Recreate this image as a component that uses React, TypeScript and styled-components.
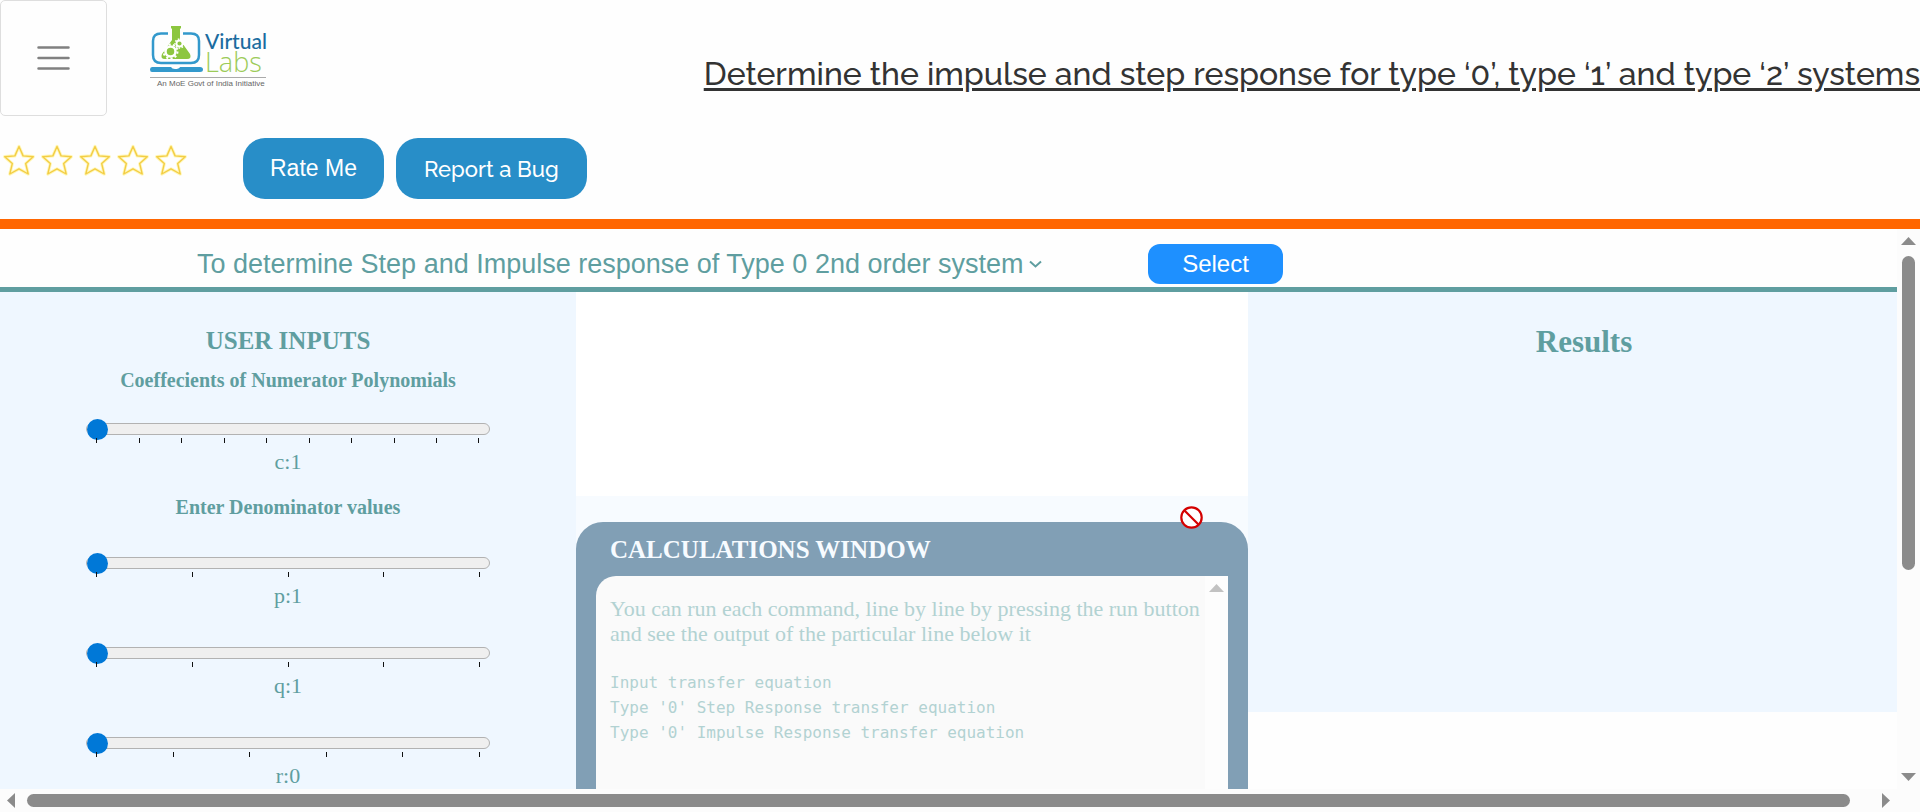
import React, { useId, useState } from 'react';
import styled, { createGlobalStyle } from 'styled-components';

const teal = '#5f9ea0';
const serif = "'Liberation Serif', 'Times New Roman', serif";
const sans = "'Liberation Sans', Arial, sans-serif";
const display = "Raleway, Lato, sans-serif";

const GlobalStyle = createGlobalStyle`
  *, *::before, *::after { box-sizing: border-box; }
  body { margin: 0; background: #fefefe; overflow: hidden; }
  h1, h2, h3, p, pre { margin: 0; }
  button, select { font-family: inherit; cursor: pointer; }
`;

const Page = styled.div`
  display: flex;
  flex-direction: column;
  height: 100vh;
  font-family: ${sans};
`;

const Header = styled.header`
  flex: none;
  border-bottom: 10px solid #ff6600;
  padding-bottom: 20px;
`;

const TopRow = styled.div`
  display: flex;
  align-items: flex-start;
`;

const MenuButton = styled.button`
  display: flex;
  align-items: center;
  justify-content: center;
  width: 107px;
  height: 116px;
  padding: 0;
  background: #fefefe;
  border: 1px solid #dedede;
  border-radius: 5px;
`;

const LogoLink = styled.a`
  display: block;
  margin: 20px 0 0 42px;
  line-height: 0;
`;

const Title = styled.h1`
  margin: 52px 0 0 auto;
  font-family: ${display};
  font-size: 32px;
  font-weight: 500;
  line-height: 44px;
  color: #333;
  white-space: nowrap;
  text-decoration: underline;
  text-decoration-thickness: 3px;
  text-underline-offset: 3px;
`;

const ActionRow = styled.div`
  display: flex;
  align-items: center;
  padding-top: 22px;
`;

const Stars = styled.div`
  display: flex;
  gap: 6px;
  width: 243px;
  padding: 0 3px 18px;
`;

const PillButton = styled.button<{ $display?: boolean }>`
  height: 61px;
  margin-right: 12px;
  padding: 0 ${p => (p.$display ? 28 : 27)}px;
  border: 0;
  border-radius: 22px;
  background: #288ec8;
  color: #fff;
  font-family: ${p => (p.$display ? display : sans)};
  font-size: ${p => (p.$display ? 22 : 23)}px;
  font-weight: ${p => (p.$display ? 500 : 400)};
`;

const Frame = styled.div`
  flex: 1;
  min-height: 0;
  display: grid;
  grid-template-columns: minmax(0, 1fr) 23px;
  grid-template-rows: minmax(0, 1fr) 23px;
  background: #fcfcfc;
`;

const Viewport = styled.main`
  overflow: hidden;
  background: #fefefe;
`;

const Toolbar = styled.div`
  display: flex;
  align-items: center;
  height: 63px;
  padding: 12px 0 0 193px;
  border-bottom: 5px solid ${teal};
`;

const Picker = styled.select`
  appearance: none;
  border: 0;
  padding: 0 4px;
  background: none;
  color: ${teal};
  font-size: 27px;
  line-height: 36px;
`;

const SelectButton = styled.button`
  width: 135px;
  height: 40px;
  margin-left: 105px;
  border: 0;
  border-radius: 12px;
  background: #1e90ff;
  color: #fff;
  font-size: 24px;
`;

const Columns = styled.div`
  display: grid;
  grid-template-columns: 30% 35% 35%;
  align-items: start;
  width: 100vw;
  font-family: ${serif};
  color: ${teal};
`;

const Inputs = styled.section`
  padding: 33px 0 40px;
  background: #eff7ff;
  text-align: center;
`;

const PanelTitle = styled.h2<{ $large?: boolean }>`
  font-size: ${p => (p.$large ? 31 : 25)}px;
  line-height: ${p => (p.$large ? 34 : 32)}px;
`;

const GroupTitle = styled.h3`
  padding: 7px 0 8px;
  font-size: 20px;
  line-height: 32px;
`;

const SliderGroup = styled.div<{ $loose?: boolean }>`
  padding-top: ${p => (p.$loose ? 21 : 14)}px;
`;

const SliderBlock = styled.div`
  display: flex;
  flex-direction: column;
  align-items: center;
  & + & { padding-top: 24px; }
`;

const Range = styled.input`
  appearance: none;
  width: 70%;
  height: 22px;
  margin: 0;
  background: none;
  &::-webkit-slider-runnable-track {
    height: 12px;
    border: 1px solid #b2b2b2;
    border-radius: 6px;
    background: #efefef;
  }
  &::-webkit-slider-thumb {
    appearance: none;
    width: 21px;
    height: 21px;
    margin-top: -5px;
    border-radius: 50%;
    background: #0078d7;
  }
`;

const Ticks = styled.div`
  display: flex;
  justify-content: space-between;
  width: 70%;
  height: 5px;
  margin-top: -2px;
  padding: 0 10px;
  i { width: 1px; background: #111; }
`;

const SliderLabel = styled.label`
  padding: 6px 0 9px;
  font-size: 22px;
  line-height: 26px;
`;

const Middle = styled.section`
  display: flex;
  flex-direction: column;
`;

const Plot = styled.div`
  height: 204px;
  background: #fff;
`;

const CalcWrap = styled.div`
  position: relative;
  padding-top: 26px;
  background: #f7fbff;
`;

const Blocked = styled.svg`
  position: absolute;
  top: 10px;
  right: 45px;
`;

const Calc = styled.div`
  padding: 12px 20px 20px;
  border-radius: 27px;
  background: #819fb5;
`;

const CalcTitle = styled.h2`
  padding: 0 14px 10px;
  color: #f7fbff;
  font-size: 25px;
  line-height: 32px;
`;

const Console = styled.div`
  display: flex;
  height: 400px;
  border-radius: 20px 0 0 20px;
  background: #fafafa;
  color: #b2d2d2;
  overflow: hidden;
`;

const ConsoleText = styled.div`
  flex: 1;
  padding: 20px 0 20px 14px;
  font-size: 22px;
  line-height: 25px;
`;

const Code = styled.pre`
  margin-top: 24px;
  font-family: 'DejaVu Sans Mono', monospace;
  font-size: 16px;
  line-height: 25px;
`;

const ConsoleBar = styled.div`
  width: 23px;
  padding: 5px 4px;
  background: #fdfdfd;
  line-height: 0;
`;

const Results = styled.section`
  min-height: 420px;
  padding-top: 33px;
  background: #eff7ff;
  text-align: center;
`;

const ScrollBar = styled.div<{ $horizontal?: boolean }>`
  display: flex;
  flex-direction: ${p => (p.$horizontal ? 'row' : 'column')};
  align-items: center;
  justify-content: space-between;
  padding: ${p => (p.$horizontal ? '0 3px' : '5px 0')};
`;

const ScrollTrack = styled.div<{ $horizontal?: boolean }>`
  display: flex;
  flex: 1;
  flex-direction: ${p => (p.$horizontal ? 'row' : 'column')};
  margin: ${p => (p.$horizontal ? '0 11px 0 9px' : '7px 0')};
`;

const ScrollThumb = styled.div<{ $share: number }>`
  flex: 0 0 ${p => p.$share}%;
  min-width: 13px;
  min-height: 13px;
  border-radius: 7px;
  background: #8b8b8b;
`;

const arrowPaths = {
  up: 'M0 11 7.500 3 15 11Z',
  down: 'M0 4H15L7.500 12Z',
  left: 'M12 0V15L4 7.500Z',
  right: 'M3 0V15L11 7.500Z',
};

function Arrow({ dir, color = '#8b8b8b' }: { dir: keyof typeof arrowPaths; color?: string }) {
  return (
    <svg width="15" height="15" viewBox="0 0 15 15" aria-hidden="true">
      <path d={arrowPaths[dir]} fill={color} />
    </svg>
  );
}

const starPath =
  'M16 2.500 20.100 11.900 30.300 12.700 22.700 19.600 25.200 30 16 24.800 6.800 30 9.300 19.600 1.700 12.700 11.900 11.900Z';

function Star() {
  return (
    <svg width="32" height="32" viewBox="0 0 32 32" strokeLinejoin="round" aria-hidden="true">
      <path d={starPath} fill="none" stroke="#fff7b8" strokeWidth="3.200" />
      <path d={starPath} fill="none" stroke="#f3cd45" strokeWidth="1.400" />
    </svg>
  );
}

function Logo() {
  return (
    <svg width="118" height="70" viewBox="0 0 118 70" role="img" aria-label="Virtual Labs">
      <path d="M19 13.500H12Q4 13.500 4 21V35Q4 43 12 43H42Q50 43 50 35V21Q50 13.500 42 13.500H34" fill="none" stroke="#3399cc" strokeWidth="2.500" />
      <path d="M3 47H22Q23 49 26 49Q30 49 31 47H51Q54 47 54 49.500Q54 52 51 52H3Q1 52 1 49.500Q1 47 3 47Z" fill="#3399cc" />
      <path d="M22 6H32V8.500H31V20L41 34Q43 39 38 39H16Q11 39 13 34L23 20V8.500H22Z" fill="#8cc63f" />
      <circle cx="21.500" cy="31.500" r="5" fill="none" stroke="#fff" strokeWidth="2.500" />
      <circle cx="21.500" cy="31.500" r="7" fill="none" stroke="#fff" strokeWidth="2" strokeDasharray="2.200 2.200" />
      <circle cx="30.500" cy="23.500" r="3" fill="none" stroke="#fff" strokeWidth="1.800" />
      <circle cx="30.500" cy="23.500" r="4.500" fill="none" stroke="#fff" strokeWidth="1.500" strokeDasharray="1.600 1.550" />
      <text x="56" y="29" fontFamily="Lato, sans-serif" fontSize="21" fontWeight="500" fill="#1b6ca0">Virtual</text>
      <text x="56" y="52" fontFamily="Open Sans, sans-serif" fontSize="27" fontWeight="300" fill="#9ccb58">Labs</text>
      <path d="M1 57.500H117" stroke="#aaa" />
      <text x="8" y="66" fontFamily="Liberation Sans, sans-serif" fontSize="8" fill="#666">An MoE Govt of India Initiative</text>
    </svg>
  );
}

function Slider({ name, min, ticks }: { name: string; min: number; ticks: number }) {
  const id = useId();
  const [value, setValue] = useState(min);
  return (
    <SliderBlock>
      <Range id={id} type="range" min={min} max={min + ticks - 1} value={value} onChange={e => setValue(Number(e.target.value))} />
      <Ticks aria-hidden="true">{Array.from({ length: ticks }, (_, i) => <i key={i} />)}</Ticks>
      <SliderLabel htmlFor={id}>{name}:{value}</SliderLabel>
    </SliderBlock>
  );
}

export default function App() {
  return (
    <Page>
      <GlobalStyle />
      <Header>
        <TopRow>
          <MenuButton aria-label="Menu">
            <svg width="34" height="26" viewBox="0 0 34 26" stroke="#808080" strokeWidth="2.500" strokeLinecap="round">
              <path d="M1.500 2.500H31.500M1.500 13H31.500M1.500 23.500H31.500" />
            </svg>
          </MenuButton>
          <LogoLink href="#"><Logo /></LogoLink>
          <Title>Determine the impulse and step response for type ‘0’, type ‘1’ and type ‘2’ systems</Title>
        </TopRow>
        <ActionRow>
          <Stars role="img" aria-label="Rating"><Star /><Star /><Star /><Star /><Star /></Stars>
          <PillButton>Rate Me</PillButton>
          <PillButton $display>Report a Bug</PillButton>
        </ActionRow>
      </Header>
      <Frame>
        <Viewport>
          <Toolbar>
            <Picker aria-label="Experiment">
              <option>To determine Step and Impulse response of Type 0 2nd order system</option>
            </Picker>
            <svg width="15" height="10" viewBox="0 0 15 10" fill="none" stroke={teal} strokeWidth="2" aria-hidden="true">
              <path d="M2 2.500 7.500 7.500 13 2.500" />
            </svg>
            <SelectButton>Select</SelectButton>
          </Toolbar>
          <Columns>
            <Inputs>
              <PanelTitle>USER INPUTS</PanelTitle>
              <GroupTitle>Coeffecients of Numerator Polynomials</GroupTitle>
              <SliderGroup>
                <Slider name="c" min={1} ticks={10} />
              </SliderGroup>
              <GroupTitle>Enter Denominator values</GroupTitle>
              <SliderGroup $loose>
                <Slider name="p" min={1} ticks={5} />
                <Slider name="q" min={1} ticks={5} />
                <Slider name="r" min={0} ticks={6} />
              </SliderGroup>
            </Inputs>
            <Middle>
              <Plot />
              <CalcWrap>
                <Calc>
                  <CalcTitle>CALCULATIONS WINDOW</CalcTitle>
                  <Console>
                    <ConsoleText>
                      <p>You can run each command, line by line by pressing the run button and see the output of the particular line below it</p>
                      <Code>{"Input transfer equation\nType '0' Step Response transfer equation\nType '0' Impulse Response transfer equation"}</Code>
                    </ConsoleText>
                    <ConsoleBar><Arrow dir="up" color="#c2c2c2" /></ConsoleBar>
                  </Console>
                </Calc>
                <Blocked width="23" height="23" viewBox="0 0 23 23" aria-hidden="true">
                  <circle cx="11.500" cy="11.500" r="10.200" fill="#fff" stroke="#d40000" strokeWidth="2.200" />
                  <path d="M4.500 4.500 18.500 18.500" stroke="#d40000" strokeWidth="2.200" />
                </Blocked>
              </CalcWrap>
            </Middle>
            <Results><PanelTitle $large>Results</PanelTitle></Results>
          </Columns>
        </Viewport>
        <ScrollBar aria-hidden="true">
          <Arrow dir="up" />
          <ScrollTrack><ScrollThumb $share={62} /></ScrollTrack>
          <Arrow dir="down" />
        </ScrollBar>
        <ScrollBar $horizontal aria-hidden="true">
          <Arrow dir="left" />
          <ScrollTrack $horizontal><ScrollThumb $share={99} /></ScrollTrack>
          <Arrow dir="right" />
        </ScrollBar>
      </Frame>
    </Page>
  );
}
